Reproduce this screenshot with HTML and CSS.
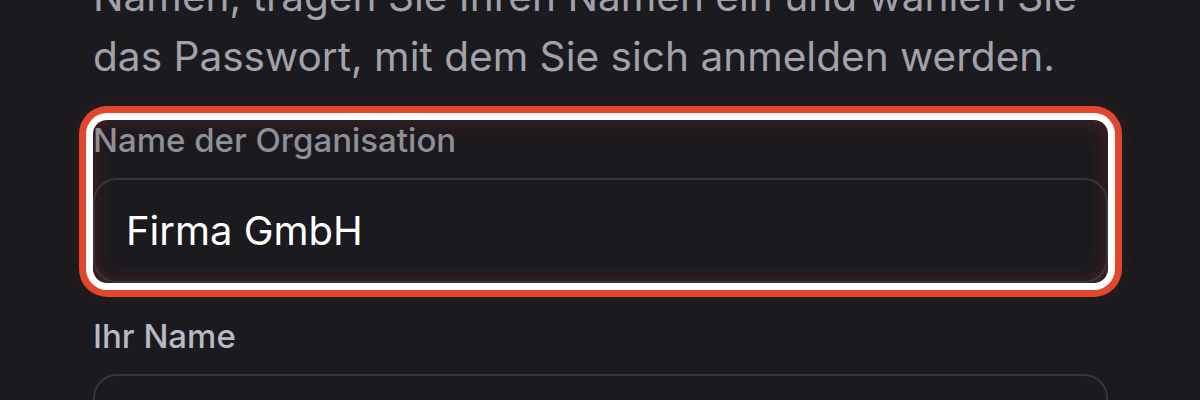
FILE: index.html
```html
<!DOCTYPE html>
<html lang="de">
<head>
<meta charset="utf-8">
<title>Organisation einrichten</title>
<link rel="stylesheet" href="styles.css">
</head>
<body>
<main class="form">
  <p class="intro">Namen, tragen Sie Ihren Namen ein und wählen Sie<br>das Passwort, mit dem Sie sich anmelden werden.</p>
  <div class="field field--highlight">
    <label class="label label--dim" for="org">Name der Organisation</label>
    <input class="input" id="org" type="text" value="Firma GmbH">
  </div>
  <div class="field">
    <label class="label" for="name">Ihr Name</label>
    <input class="input" id="name" type="text" value="">
  </div>
</main>
</body>
</html>
```

FILE: styles.css
```css
html, body {
  margin: 0;
  padding: 0;
  background: #1b1a1e;
  overflow: hidden;
  height: 400px;
}

body {
  font-family: Inter, "Noto Sans", sans-serif;
}

.form {
  width: 1015px;
  margin-left: 93px;
  margin-top: -33px;
  display: flex;
  flex-direction: column;
}

.intro {
  margin: 0 0 33px 0;
  font-size: 40.6px;
  line-height: 60px;
  color: #a2a2aa;
}

.field {
  display: flex;
  flex-direction: column;
  gap: 17px;
  border-radius: 14px;
}

.field--highlight {
  margin-bottom: 33px;
  box-shadow:
    inset 0 0 22px rgba(190, 60, 40, 0.28),
    0 0 0 7px #ffffff,
    0 0 0 14px #e2472b,
    0 0 24px 14px rgba(226, 71, 43, 0.08);
}

.label {
  display: block;
  font-size: 33px;
  line-height: 41px;
  font-weight: 500;
  color: #b7bac4;
}

.label--dim {
  color: #8f8f97;
}

.input {
  box-sizing: border-box;
  width: 100%;
  height: 105px;
  padding: 0 31px;
  border: 2px solid #37363c;
  border-radius: 24px;
  background: transparent;
  color: #ffffff;
  font-family: Inter, "Noto Sans", sans-serif;
  font-size: 40px;
  outline: none;
}
```
